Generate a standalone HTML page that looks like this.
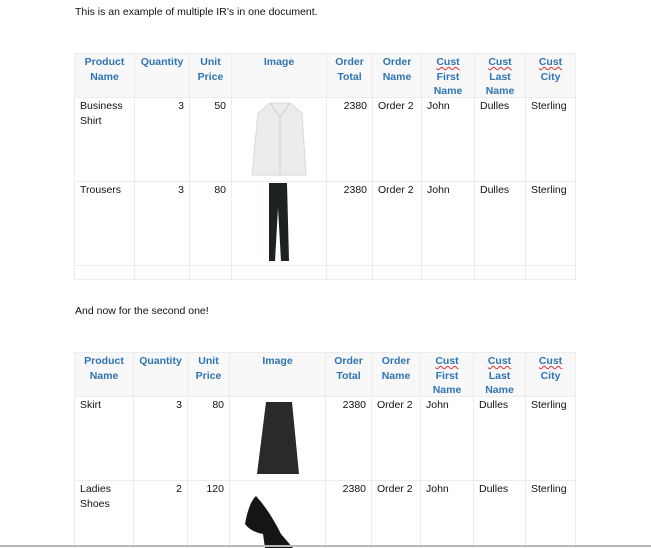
<!DOCTYPE html>
<html><head><meta charset="utf-8"><style>
html,body{margin:0;width:651px;height:548px;overflow:hidden}
body{background:#fff;position:relative;font-family:"Liberation Sans",sans-serif;font-size:10.5px;color:#111}
p{position:absolute;left:75px;margin:0;font-size:10.5px}
table{position:absolute;left:74px;border-collapse:collapse;table-layout:fixed}
td,th{border:1px solid #ececec;vertical-align:top;padding:0 5px;line-height:14.5px;overflow:hidden}
td>div,th>div{overflow:hidden}
th{background:#f8f8f8;color:#2e74b5;font-weight:bold;text-align:center}
.r{text-align:right}
svg{display:block;margin:0 auto}
u{text-decoration:underline wavy #e03030;text-decoration-thickness:1px}
.line{position:absolute;left:0;top:545px;width:651px;height:2px;background:#b8b8b8}
.h{height:43px;padding-top:1px;box-sizing:border-box}
.b{height:83px;padding-top:1px;box-sizing:border-box}
.e{height:13px}
</style></head><body>
<p style="top:6px">This is an example of multiple IR’s in one document.</p>
<table style="top:53px">
<colgroup><col style="width:60px"><col style="width:55px"><col style="width:42px"><col style="width:95px"><col style="width:46px"><col style="width:49px"><col style="width:53px"><col style="width:51px"><col style="width:50px"></colgroup>
<tr><th><div class="h">Product Name</div></th><th><div class="h">Quantity</div></th><th><div class="h">Unit Price</div></th><th><div class="h">Image</div></th><th><div class="h">Order Total</div></th><th><div class="h">Order Name</div></th><th><div class="h"><u>Cust</u> First Name</div></th><th><div class="h"><u>Cust</u> Last Name</div></th><th><div class="h"><u>Cust</u> City</div></th></tr>
<tr><td><div class="b">Business Shirt</div></td><td class="r"><div class="b">3</div></td><td class="r"><div class="b">50</div></td><td><div class="b"><svg width="70" height="78"><path d="M14 14 L26 4 L46 4 L58 14 L62 76 L8 76 Z" fill="#ececec" stroke="#d8d8d8"/><path d="M26 4 L36 18 L46 4 M36 18 L36 76" stroke="#d0d0d0" fill="none"/></svg></div></td><td class="r"><div class="b">2380</div></td><td><div class="b">Order 2</div></td><td><div class="b">John</div></td><td><div class="b">Dulles</div></td><td><div class="b">Sterling</div></td></tr>
<tr><td><div class="b">Trousers</div></td><td class="r"><div class="b">3</div></td><td class="r"><div class="b">80</div></td><td><div class="b"><svg width="70" height="80"><path d="M25 0 L43 0 L45 78 L37 78 L34 25 L31 78 L25 78 Z" fill="#1e2220"/></svg></div></td><td class="r"><div class="b">2380</div></td><td><div class="b">Order 2</div></td><td><div class="b">John</div></td><td><div class="b">Dulles</div></td><td><div class="b">Sterling</div></td></tr>
<tr><td><div class="e"></div></td><td></td><td></td><td></td><td></td><td></td><td></td><td></td><td></td></tr>
</table>
<p style="top:305px">And now for the second one!</p>
<table style="top:352px">
<colgroup><col style="width:59px"><col style="width:54px"><col style="width:42px"><col style="width:96px"><col style="width:46px"><col style="width:49px"><col style="width:53px"><col style="width:52px"><col style="width:50px"></colgroup>
<tr><th><div class="h">Product Name</div></th><th><div class="h">Quantity</div></th><th><div class="h">Unit Price</div></th><th><div class="h">Image</div></th><th><div class="h">Order Total</div></th><th><div class="h">Order Name</div></th><th><div class="h"><u>Cust</u> First Name</div></th><th><div class="h"><u>Cust</u> Last Name</div></th><th><div class="h"><u>Cust</u> City</div></th></tr>
<tr><td><div class="b">Skirt</div></td><td class="r"><div class="b">3</div></td><td class="r"><div class="b">80</div></td><td><div class="b"><svg width="70" height="78"><path d="M23 4 L49 4 L56 76 L14 76 Z" fill="#2a2a2a"/></svg></div></td><td class="r"><div class="b">2380</div></td><td><div class="b">Order 2</div></td><td><div class="b">John</div></td><td><div class="b">Dulles</div></td><td><div class="b">Sterling</div></td></tr>
<tr><td><div class="b">Ladies Shoes</div></td><td class="r"><div class="b">2</div></td><td class="r"><div class="b">120</div></td><td><div class="b"><svg width="70" height="80"><path d="M2 42 Q6 20 13 14 Q26 28 38 52 L50 66 L22 66 L20 52 Q8 50 2 42 Z" fill="#151515"/></svg></div></td><td class="r"><div class="b">2380</div></td><td><div class="b">Order 2</div></td><td><div class="b">John</div></td><td><div class="b">Dulles</div></td><td><div class="b">Sterling</div></td></tr>
</table>
<div class="line"></div>
</body></html>
